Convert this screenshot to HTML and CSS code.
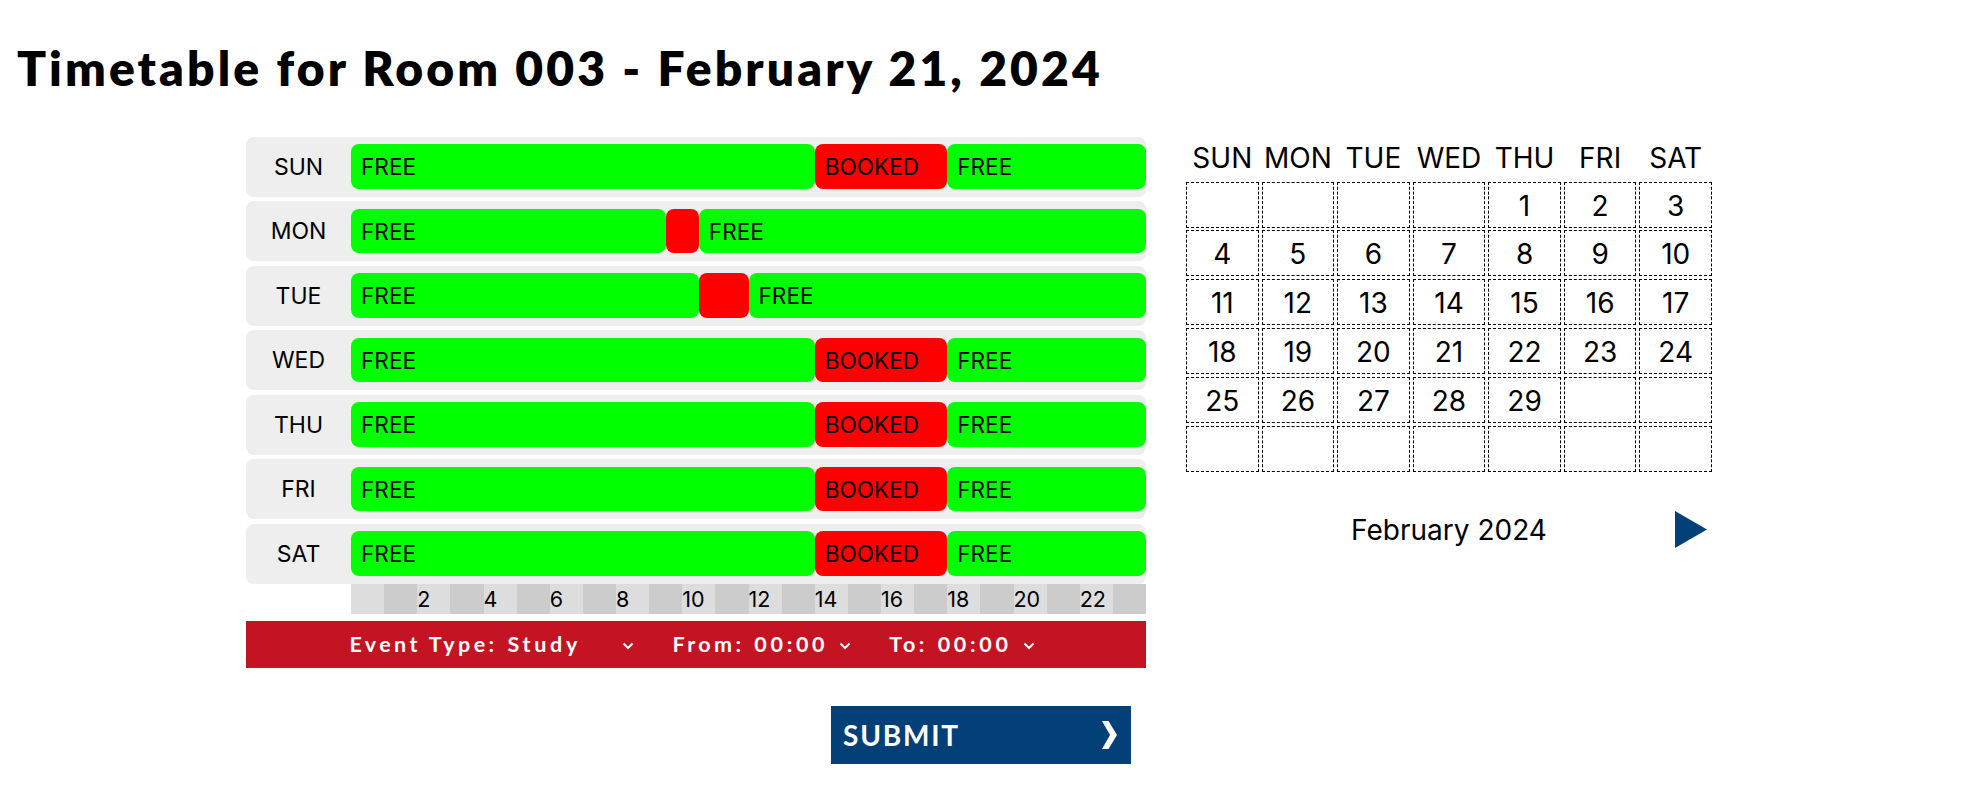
FILE: index.html
```html
<!DOCTYPE html>
<html lang="en">
<head>
<meta charset="utf-8">
<title>Timetable for Room 003</title>
<link rel="stylesheet" href="styles.css">
</head>
<body>
<h1 class="title">Timetable for Room 003 - February 21, 2024</h1>
<div class="main">
  <div class="schedule">
    <div class="rows">
      <div class="row"><div class="day">SUN</div><div class="track"><div class="seg free" style="width:58.3333%">FREE</div><div class="seg booked" style="width:16.6667%">BOOKED</div><div class="seg free" style="width:25%">FREE</div></div></div>
      <div class="row"><div class="day">MON</div><div class="track"><div class="seg free" style="width:39.5833%">FREE</div><div class="seg booked" style="width:4.1667%"></div><div class="seg free" style="width:56.25%">FREE</div></div></div>
      <div class="row"><div class="day">TUE</div><div class="track"><div class="seg free" style="width:43.75%">FREE</div><div class="seg booked" style="width:6.25%"></div><div class="seg free" style="width:50%">FREE</div></div></div>
      <div class="row"><div class="day">WED</div><div class="track"><div class="seg free" style="width:58.3333%">FREE</div><div class="seg booked" style="width:16.6667%">BOOKED</div><div class="seg free" style="width:25%">FREE</div></div></div>
      <div class="row"><div class="day">THU</div><div class="track"><div class="seg free" style="width:58.3333%">FREE</div><div class="seg booked" style="width:16.6667%">BOOKED</div><div class="seg free" style="width:25%">FREE</div></div></div>
      <div class="row"><div class="day">FRI</div><div class="track"><div class="seg free" style="width:58.3333%">FREE</div><div class="seg booked" style="width:16.6667%">BOOKED</div><div class="seg free" style="width:25%">FREE</div></div></div>
      <div class="row"><div class="day">SAT</div><div class="track"><div class="seg free" style="width:58.3333%">FREE</div><div class="seg booked" style="width:16.6667%">BOOKED</div><div class="seg free" style="width:25%">FREE</div></div></div>
    </div>
    <div class="axis">
      <div class="hr even"></div><div class="hr odd"></div>
      <div class="hr even">2</div><div class="hr odd"></div>
      <div class="hr even">4</div><div class="hr odd"></div>
      <div class="hr even">6</div><div class="hr odd"></div>
      <div class="hr even">8</div><div class="hr odd"></div>
      <div class="hr even">10</div><div class="hr odd"></div>
      <div class="hr even">12</div><div class="hr odd"></div>
      <div class="hr even">14</div><div class="hr odd"></div>
      <div class="hr even">16</div><div class="hr odd"></div>
      <div class="hr even">18</div><div class="hr odd"></div>
      <div class="hr even">20</div><div class="hr odd"></div>
      <div class="hr even">22</div><div class="hr odd"></div>
    </div>
    <div class="controls">
      <span class="ctl-label">Event Type:</span>
      <span class="select select-type"><span class="val">Study</span><svg class="chev" viewBox="0 0 12 8" width="12" height="8"><polyline points="1.5,1.5 6,6 10.5,1.5" fill="none" stroke="#fff" stroke-width="2"/></svg></span>
      <span class="ctl-label gap-left">From:</span>
      <span class="select"><span class="val">00:00</span><svg class="chev" viewBox="0 0 12 8" width="12" height="8"><polyline points="1.5,1.5 6,6 10.5,1.5" fill="none" stroke="#fff" stroke-width="2"/></svg></span>
      <span class="ctl-label gap-left">To:</span>
      <span class="select"><span class="val">00:00</span><svg class="chev" viewBox="0 0 12 8" width="12" height="8"><polyline points="1.5,1.5 6,6 10.5,1.5" fill="none" stroke="#fff" stroke-width="2"/></svg></span>
    </div>
    <button class="submit" type="button"><span class="submit-text">SUBMIT</span><svg class="submit-chev" viewBox="0 0 15 28" width="15" height="28"><polygon points="0,0 6.5,0 15,14 6.5,28 0,28 8,14" fill="#fff"/></svg></button>
  </div>
  <div class="calendar">
    <div class="cal-head">
      <div>SUN</div><div>MON</div><div>TUE</div><div>WED</div><div>THU</div><div>FRI</div><div>SAT</div>
    </div>
    <div class="cal-grid">
      <div class="cell"></div><div class="cell"></div><div class="cell"></div><div class="cell"></div><div class="cell">1</div><div class="cell">2</div><div class="cell">3</div>
      <div class="cell">4</div><div class="cell">5</div><div class="cell">6</div><div class="cell">7</div><div class="cell">8</div><div class="cell">9</div><div class="cell">10</div>
      <div class="cell">11</div><div class="cell">12</div><div class="cell">13</div><div class="cell">14</div><div class="cell">15</div><div class="cell">16</div><div class="cell">17</div>
      <div class="cell">18</div><div class="cell">19</div><div class="cell">20</div><div class="cell">21</div><div class="cell">22</div><div class="cell">23</div><div class="cell">24</div>
      <div class="cell">25</div><div class="cell">26</div><div class="cell">27</div><div class="cell">28</div><div class="cell">29</div><div class="cell"></div><div class="cell"></div>
      <div class="cell"></div><div class="cell"></div><div class="cell"></div><div class="cell"></div><div class="cell"></div><div class="cell"></div><div class="cell"></div>
    </div>
    <div class="cal-nav">
      <span></span>
      <span class="month">February 2024</span>
      <svg class="next" viewBox="0 0 32 37" width="32" height="37"><polygon points="0,0 32,18.5 0,37" fill="#024077"/></svg>
    </div>
  </div>
</div>
</body>
</html>
```

FILE: styles.css
```css
* { box-sizing: border-box; }

html, body {
  margin: 0;
  padding: 0;
  background: #fff;
  color: #000;
  font-family: "Inter", "Liberation Sans", sans-serif;
}

.title {
  margin: 0;
  padding: 38.5px 0 0 17px;
  font-family: "Lato", "Liberation Sans", sans-serif;
  font-weight: 800;
  font-size: 48px;
  line-height: 57.6px;
  letter-spacing: 3.1px;
  white-space: nowrap;
}

.main {
  display: flex;
  align-items: flex-start;
  gap: 40px;
  padding-left: 246px;
  margin-top: 40.6px;
}

.schedule {
  width: 900px;
  display: flex;
  flex-direction: column;
}

.rows {
  display: flex;
  flex-direction: column;
  gap: 4.5px;
}

.row {
  height: 60px;
  background: #eeeeee;
  border-radius: 8px;
  display: flex;
  align-items: center;
}

.day {
  width: 105px;
  flex: none;
  text-align: center;
  font-size: 23px;
}

.track {
  flex: 1;
  height: 44.5px;
  display: flex;
}

.seg {
  height: 100%;
  border-radius: 8px;
  display: flex;
  align-items: center;
  padding-left: 10px;
  font-size: 22.6px;
  white-space: nowrap;
  overflow: hidden;
}

.free { background: #00ff00; }
.booked { background: #ff0000; }

.axis {
  margin-left: 105px;
  height: 30px;
  display: flex;
}

.hr {
  flex: 1;
  font-size: 21.5px;
  line-height: 30px;
  white-space: nowrap;
}

.even { background: #dddddd; }
.odd { background: #cccccc; }

.controls {
  margin-top: 7px;
  height: 47px;
  background: #c41424;
  display: flex;
  justify-content: center;
  align-items: center;
  color: #fff;
  font-family: "Lato", "Liberation Sans", sans-serif;
  font-size: 21.5px;
  padding-right: 8px;
}

.ctl-label {
  font-weight: 700;
  letter-spacing: 3.4px;
  margin-right: 10px;
}

.gap-left { margin-left: 38px; }

.select {
  display: inline-flex;
  align-items: center;
  font-weight: 700;
  letter-spacing: 3.7px;
  gap: 11px;
}

.select-type {
  width: 127px;
  justify-content: space-between;
}

.chev {
  display: block;
  margin-top: 3px;
}

.submit {
  align-self: flex-end;
  margin: 38px 15px 0 0;
  width: 300px;
  height: 58px;
  border: 0;
  border-radius: 0;
  background: #024077;
  color: #fff;
  display: flex;
  align-items: center;
  justify-content: space-between;
  padding: 0 14px 0 12px;
  font-family: "Lato", "Liberation Sans", sans-serif;
  font-weight: 700;
  font-size: 28px;
  letter-spacing: 1.8px;
  cursor: pointer;
}

.submit-chev { display: block; }

.calendar {
  width: 526px;
  flex: none;
}

.cal-head {
  display: grid;
  grid-template-columns: repeat(7, 1fr);
  column-gap: 3px;
  height: 42px;
  align-items: center;
  text-align: center;
  font-size: 28px;
  margin-bottom: 3px;
}

.cal-grid {
  display: grid;
  grid-template-columns: repeat(7, 1fr);
  grid-auto-rows: 46px;
  gap: 2.8px 3px;
}

.cell {
  border: 1px dashed #000;
  display: flex;
  align-items: center;
  justify-content: center;
  font-size: 28px;
  padding-top: 2px;
}

.cal-nav {
  display: grid;
  grid-template-columns: 1fr auto 1fr;
  align-items: center;
  height: 40px;
  margin-top: 38px;
}

.month {
  font-size: 28px;
}

.next {
  justify-self: end;
  margin: 0 5px 0 0;
  display: block;
}
```
